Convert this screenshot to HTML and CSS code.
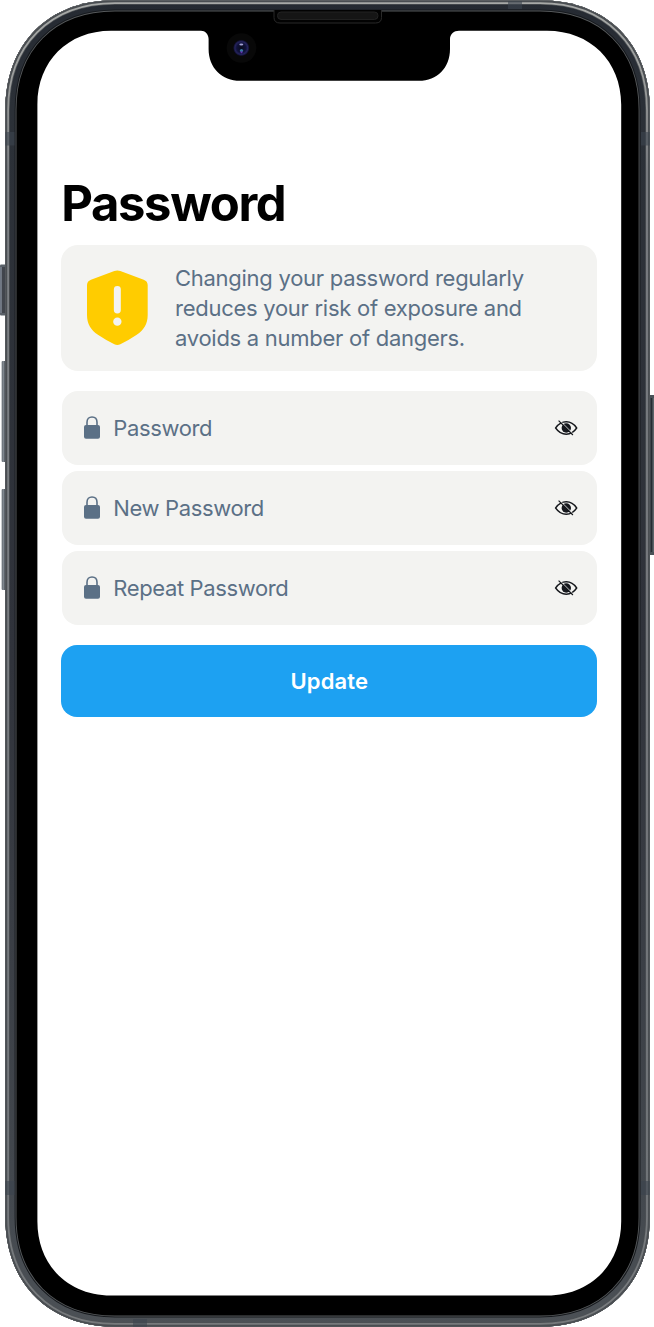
FILE: index.html
```html
<!DOCTYPE html>
<html lang="en">
<head>
<meta charset="utf-8">
<title>Password</title>
<link rel="stylesheet" href="styles.css">
</head>
<body>
<svg class="symbols" aria-hidden="true">
  <symbol id="lock" viewBox="0 0 16 23">
    <path d="M3 10V6.200C3 3 5.100 1 8 1s5 2 5 5.200V10" fill="none" stroke="currentColor" stroke-width="1.600"/>
    <rect x="0" y="9" width="16" height="13.700" rx="2" fill="currentColor"/>
  </symbol>
  <symbol id="eye-slash" viewBox="0 0 24 18">
    <path d="M1.600 9C4.400 5 8 2.800 12.300 2.800S20 5 22.700 9C20 13 16.600 15.200 12.300 15.200S4.400 13 1.600 9Z" fill="none" stroke="#15171c" stroke-width="1.400"/>
    <circle cx="12.300" cy="9" r="4.700" fill="#15171c"/>
    <path d="M5.800 1.500 19.800 15.500" stroke="#f3f3f1" stroke-width="1"/>
    <path d="M4.600 1.700 18.900 16" stroke="#15171c" stroke-width="1.200"/>
  </symbol>
</svg>
<div class="phone">
  <svg class="frame" viewBox="0 0 654 1327" aria-hidden="true">
    <defs>
      <path id="body" d="M115 .3H540C607 .3 649.800 44 649.800 110V1217C649.800 1283 607 1326.700 540 1326.700H115C48 1326.700 5.300 1283 5.300 1217V110C5.300 44 48 .3 115 .3Z"/>
      <clipPath id="bodyClip"><use href="#body"/></clipPath>
      <linearGradient id="band" gradientUnits="userSpaceOnUse" x1="0" y1="0" x2="0" y2="1327">
        <stop offset="0" stop-color="#252a32"/><stop offset=".08" stop-color="#2b3037"/><stop offset=".5" stop-color="#30333b"/><stop offset=".9" stop-color="#43484e"/><stop offset="1" stop-color="#4c5156"/>
      </linearGradient>
      <linearGradient id="shine" gradientUnits="userSpaceOnUse" x1="0" y1="0" x2="0" y2="1327">
        <stop offset="0" stop-color="#a8aaa8"/><stop offset=".07" stop-color="#989a99"/><stop offset=".13" stop-color="#7d8084"/><stop offset=".9" stop-color="#74787c"/><stop offset="1" stop-color="#777a7c"/>
      </linearGradient>
      <linearGradient id="key" x1="0" x2="1">
        <stop offset="0" stop-color="#515960"/><stop offset=".3" stop-color="#8b9299"/><stop offset=".65" stop-color="#4c535a"/><stop offset="1" stop-color="#252b31"/>
      </linearGradient>
      <radialGradient id="lens"><stop offset="0" stop-color="#090b1c"/><stop offset=".55" stop-color="#10123a"/><stop offset=".78" stop-color="#25235d"/><stop offset="1" stop-color="#080815"/></radialGradient>
    </defs>
    <rect x="0" y="264.500" width="7" height="51" rx="1" fill="#596068"/>
    <rect x="1.800" y="267" width="5" height="46" fill="#41454c"/>
    <path d="M1 267V313" stroke="#8991a0"/>
    <rect x="1.700" y="361" width="5" height="101" rx="1" fill="url(#key)"/>
    <rect x="1.700" y="489" width="5" height="101" rx="1" fill="url(#key)"/>
    <rect x="648" y="395" width="6.500" height="160" rx="1" fill="#4a5157"/>
    <path d="M651.500 398V552" stroke="#252d33" stroke-width="1.600"/>
    <path d="M653.300 398V552" stroke="#606b70"/>
    <g clip-path="url(#bodyClip)" fill="none">
      <use href="#body" fill="#000"/>
      <use href="#body" stroke="#55585a" stroke-width="22.400"/>
      <use href="#body" stroke="#16191d" stroke-width="20.600"/>
      <use href="#body" stroke="url(#band)" stroke-width="18.600"/>
      <use href="#body" stroke="#4c5054" stroke-width="9"/>
      <use href="#body" stroke="url(#shine)" stroke-width="7.400"/>
      <use href="#body" stroke="#4a4e52" stroke-width="3.800"/>
      <g fill="#3c454e" fill-opacity=".6">
        <rect x="5" y="132" width="9.500" height="13.500"/><rect x="641" y="132" width="9" height="13.500"/>
        <rect x="5" y="1181" width="9.500" height="14"/><rect x="641" y="1181" width="9" height="14"/>
        <rect x="508" y="1" width="14" height="8"/><rect x="133" y="1319" width="14" height="8"/>
      </g>
    </g>
    <path d="M111 30.700H201C205 30.700 208.600 34 208.600 39V49C208.600 68 222 80.800 240 80.800H419C437 80.800 450 68 450 49V39C450 34 454 30.700 459 30.700H547C590 30.700 621.200 61 621.200 104.500V1221.500C621.200 1265 590 1295.500 547 1295.500H111C68 1295.500 37.400 1265 37.400 1221.500V104.500C37.400 61 68 30.700 111 30.700Z" fill="#fff"/>
    <path d="M274 10V17.500Q274 23 280 23H375.500Q381.500 23 381.500 17.500V10" fill="#020202" stroke="#292929"/>
    <rect x="277.500" y="12" width="100.500" height="7.400" rx="3.500" fill="#151515" stroke="#232323"/>
    <circle cx="241.500" cy="48" r="14.800" fill="#080808"/>
    <circle cx="241.300" cy="48" r="8.200" fill="url(#lens)"/>
    <ellipse cx="241.300" cy="44.600" rx="2" ry="1" fill="#a4a2d4"/>
    <circle cx="241.500" cy="50.600" r="1.600" fill="#397ba5"/>
    <circle cx="241.500" cy="52.300" r="1" fill="#692eb0"/>
  </svg>
  <main class="screen">
    <h1 class="title">Password</h1>
    <section class="notice">
      <svg class="shield" viewBox="0 0 61 75" aria-hidden="true">
        <path d="M27.500 .9Q30.500-.3 33.500 .9L57 9.500Q61 11 61 15V45C61 54 57 60 50 65Q42 70.500 33.500 74.500Q30.500 75.700 27.500 74.500Q19 70.500 11 65C4 60 0 54 0 45V15Q0 11 4 9.500Z" fill="#fc0"/>
        <path d="M30.500 19.500V40" stroke="#f3f3f1" stroke-width="7" stroke-linecap="round"/>
        <circle cx="30.500" cy="51.700" r="4.200" fill="#f3f3f1"/>
      </svg>
      <p class="message">Changing your password regularly<br>reduces your risk of exposure and<br>avoids a number of dangers.</p>
    </section>
    <form class="fields">
      <div class="field"><svg class="lock"><use href="#lock"/></svg><span class="label">Password</span><svg class="eye"><use href="#eye-slash"/></svg></div>
      <div class="field"><svg class="lock"><use href="#lock"/></svg><span class="label">New Password</span><svg class="eye"><use href="#eye-slash"/></svg></div>
      <div class="field"><svg class="lock"><use href="#lock"/></svg><span class="label">Repeat Password</span><svg class="eye"><use href="#eye-slash"/></svg></div>
      <button class="update" type="button">Update</button>
    </form>
  </main>
</div>
</body>
</html>
```
FILE: styles.css
```css
* { box-sizing: border-box; }
body { margin: 0; background: #fff; font-family: Inter, sans-serif; overflow: hidden; }
.symbols { position: absolute; width: 0; height: 0; }
.phone { position: relative; width: 654px; height: 1327px; }
.frame { position: absolute; inset: 0; width: 654px; height: 1327px; }
.screen { position: relative; padding: 174px 56.700px 0 61.300px; }
.title { margin: 0 0 11px; height: 60px; font-size: 49px; line-height: 60px; font-weight: 700; letter-spacing: -1.400px; color: #000; white-space: nowrap; }
.notice { height: 126px; display: flex; align-items: center; gap: 27px; padding-left: 26px; border-radius: 17px; background: #f3f3f1; }
.shield { width: 60.700px; height: 75px; flex: none; margin-bottom: 1.500px; }
.message { margin: 0 0 1px; font-size: 22px; line-height: 30px; letter-spacing: -.270px; color: #5b7086; white-space: nowrap; }
.fields { margin: 20px 0 0; display: flex; flex-direction: column; gap: 6.500px; }
.field { height: 73.500px; margin: 0 .5px; padding: 0 18.500px 0 22px; border-radius: 16px; background: #f3f3f1; color: #5b7086; display: flex; align-items: center; }
.lock { width: 16px; height: 23px; margin-right: 13.500px; }
.label { flex: 1; font-size: 22px; line-height: 30px; letter-spacing: -.370px; padding-top: 1px; }
.eye { width: 24px; height: 18px; }
.update { margin-top: 13.500px; height: 72px; border: 0; border-radius: 16px; background: #1da1f2; color: #fff; font: 600 22px/30px Inter, sans-serif; letter-spacing: .1px; }
```
